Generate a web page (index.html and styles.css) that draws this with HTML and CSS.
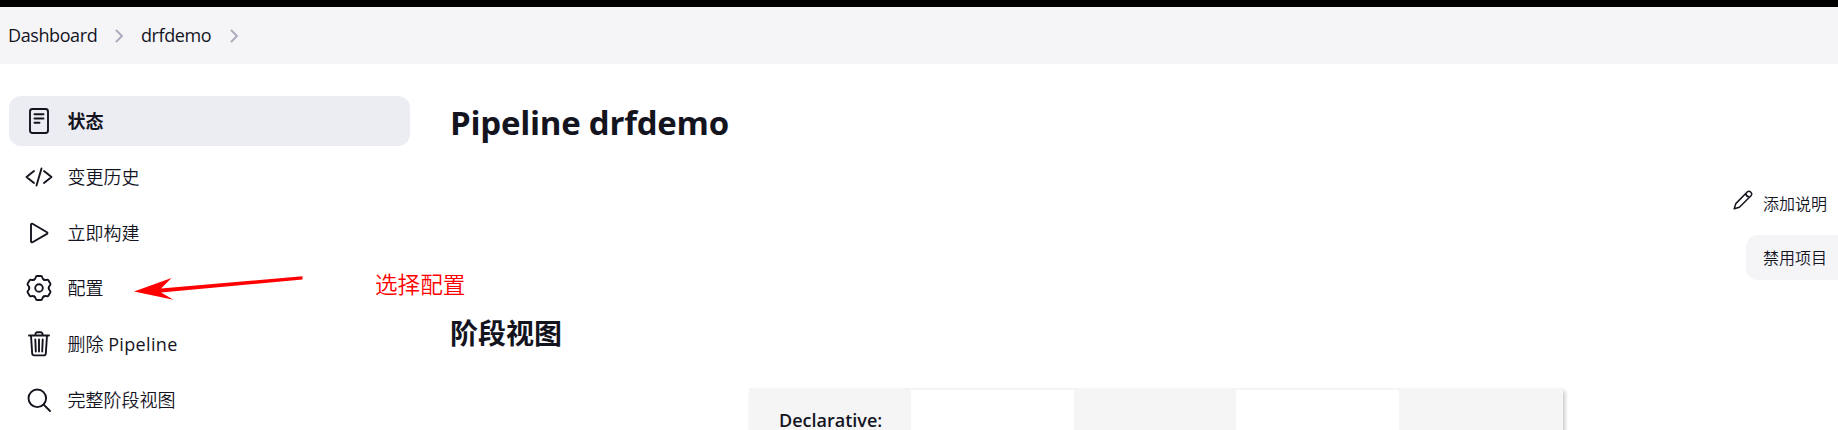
FILE: index.html
```html
<!DOCTYPE html>
<html lang="zh-CN">
<head>
<meta charset="utf-8">
<title>drfdemo [Jenkins]</title>
<link rel="stylesheet" href="styles.css">
</head>
<body>
<header class="topbar"></header>
<nav class="breadcrumbs">
  <a class="crumb crumb-home">Dashboard</a>
  <svg class="chevron" viewBox="0 0 8 14"><path d="M1 1l6 6-6 6"/></svg>
  <a class="crumb crumb-job">drfdemo</a>
  <svg class="chevron" viewBox="0 0 8 14"><path d="M1 1l6 6-6 6"/></svg>
</nav>
<div class="page">
  <aside class="sidebar">
    <a class="task active"><svg class="icon" viewBox="0 0 28 28"><rect x="5" y="2" width="18" height="24" rx="2.5"/><path d="M9.500 7.200h9M9.500 11.500h9M9.500 15.800h5"/></svg><span>状态</span></a>
    <a class="task"><svg class="icon" viewBox="0 0 28 28"><path d="M9 8l-7.500 6L9 20M19 8l7.500 6L19 20M16.500 5.500l-5 17"/></svg><span>变更历史</span></a>
    <a class="task"><svg class="icon" viewBox="0 0 28 28"><path d="M6 5.700v16.600a1 1 0 0 0 1.500.9l14.500-8.300a1 1 0 0 0 0-1.700l-14.500-8.400A1 1 0 0 0 6 5.700z"/></svg><span>立即构建</span></a>
    <a class="task"><svg class="icon" viewBox="0 0 28 28">
      <defs><path id="tooth" d="M9.150 5.600C9.930 5.150 10.500 4.600 10.700 3.400Q10.900 2 12.200 2H15.800Q17.100 2 17.300 3.400C17.500 4.600 18.070 5.150 18.850 5.600"/></defs>
      <circle cx="14" cy="14" r="3.800"/>
      <use href="#tooth"/><use href="#tooth" transform="rotate(60 14 14)"/><use href="#tooth" transform="rotate(120 14 14)"/><use href="#tooth" transform="rotate(180 14 14)"/><use href="#tooth" transform="rotate(240 14 14)"/><use href="#tooth" transform="rotate(300 14 14)"/>
    </svg><span>配置</span></a>
    <a class="task"><svg class="icon" viewBox="0 0 28 28"><path d="M4 5.500h20M6 5.500l1.200 18a2 2 0 0 0 2 1.900h9.600a2 2 0 0 0 2-1.900L22 5.500M10.500 5.500V4a1.700 1.700 0 0 1 1.700-1.700h3.600A1.700 1.700 0 0 1 17.500 4v1.500M10.300 9.500l.5 12M14 9.500v12M17.700 9.500l-.5 12"/></svg><span>删除 <span class="latin">Pipeline</span></span></a>
    <a class="task"><svg class="icon" viewBox="0 0 28 28"><circle cx="12.300" cy="12.300" r="8.800"/><path d="M18.700 18.700l6.300 6.300"/></svg><span>完整阶段视图</span></a>
  </aside>
  <main class="main">
    <h1 class="title">Pipeline drfdemo</h1>
    <div class="actions">
      <a class="edit"><svg class="pencil" viewBox="0 0 20 20"><path d="M1.200 18.800l1.600-5.200L14.200 2a2.700 2.700 0 0 1 3.800 3.800L6.400 17.200zM12.700 3.500q.6 3.200 3.800 3.800"/></svg>添加说明</a>
      <button class="disable">禁用项目</button>
    </div>
    <h2 class="subtitle">阶段视图</h2>
    <div class="stages">
      <div class="stage head"><span class="stage-label">Declarative:</span></div>
      <div class="stage"></div>
      <div class="stage alt"></div>
      <div class="stage"></div>
      <div class="stage alt"></div>
    </div>
  </main>
</div>
<svg class="arrow" viewBox="0 0 172 28"><path d="M0 15.500L37.500 2 27 12.500 168.500.2v3.200L27 16.500l12.500 7.200z"/></svg>
<div class="note">选择配置</div>
</body>
</html>
```
FILE: styles.css
```css
* { box-sizing: border-box; }
body { margin: 0; height: 430px; overflow: hidden; position: relative; background: #fff; color: #14141f; font: 18px "Open Sans", "Noto Sans CJK SC", sans-serif; }
.topbar { height: 7px; background: #000; }
.breadcrumbs { height: 57px; background: #f5f5f8; display: flex; align-items: center; padding-left: 8px; }
.crumb { white-space: nowrap; font-weight: 370; letter-spacing: -.4px; padding-bottom: 1px; }
.crumb-home { width: 107px; }
.crumb-job { width: 89px; margin-left: -1px; }
.chevron { width: 8px; height: 14px; margin-right: 19px; fill: none; stroke: #a9a9bb; stroke-width: 1.9; }
.page { display: flex; height: 366px; padding-top: 32px; overflow: hidden; }
.sidebar { width: 401px; margin-left: 9px; flex: none; display: flex; flex-direction: column; gap: 5.8px; }
.task { flex: none; height: 50px; border-radius: 12px; display: flex; align-items: center; padding-left: 16px; gap: 14.5px; white-space: nowrap; font-weight: 350; }
.task > span { padding-bottom: 2px; }
.active { background: #ecedf3; font-weight: 600; }
.icon { width: 28px; height: 28px; fill: none; stroke: #14141f; stroke-width: 1.9; stroke-linejoin: round; stroke-linecap: round; }
.latin { font-weight: 370; letter-spacing: .35px; }
.main { flex: 1; min-width: 0; margin-left: 40px; display: flex; flex-direction: column; }
.title { margin: 4px 0 0; font-size: 33px; line-height: 46px; font-weight: 700; letter-spacing: -.25px; white-space: nowrap; }
.actions { flex: none; height: 138px; padding-top: 43px; display: flex; flex-direction: column; align-items: flex-end; font-size: 16px; font-weight: 350; }
.edit { display: flex; gap: 10px; height: 30px; line-height: 30px; margin-right: 11px; }
.pencil { width: 20px; height: 20px; margin-top: 1px; fill: none; stroke: #14141f; stroke-width: 1.5; stroke-linejoin: round; }
.disable { width: 92px; height: 45px; margin-top: 16px; flex: none; border: 0; border-radius: 12px 0 0 12px; background: #f5f5f8; color: inherit; font: inherit; padding: 0 0 1px 17px; text-align: left; }
.subtitle { flex: none; margin: 29px 0 0; font-size: 28px; line-height: 40px; font-weight: 700; }
.stages { width: 814px; flex: 1; min-height: 0; margin: 35px 0 0 299px; padding-right: 2px; border-top: 2px solid #f5f5f5; display: grid; grid-template-columns: repeat(5, 1fr); box-shadow: 2px 3px 4px rgba(0,0,0,.22); background: #f5f5f5; }
.stage { min-height: 0; background: #fff; }
.head, .alt { background: #f5f5f5; }
.stage-label { display: block; padding: 19px 0 0 30px; font-weight: 600; line-height: 22px; }
.arrow { position: absolute; left: 134px; top: 276px; width: 172px; height: 28px; fill: #f00; }
.note { position: absolute; left: 375px; top: 268px; line-height: 34px; font-size: 22.600px; font-weight: 350; color: #f00; }
```
